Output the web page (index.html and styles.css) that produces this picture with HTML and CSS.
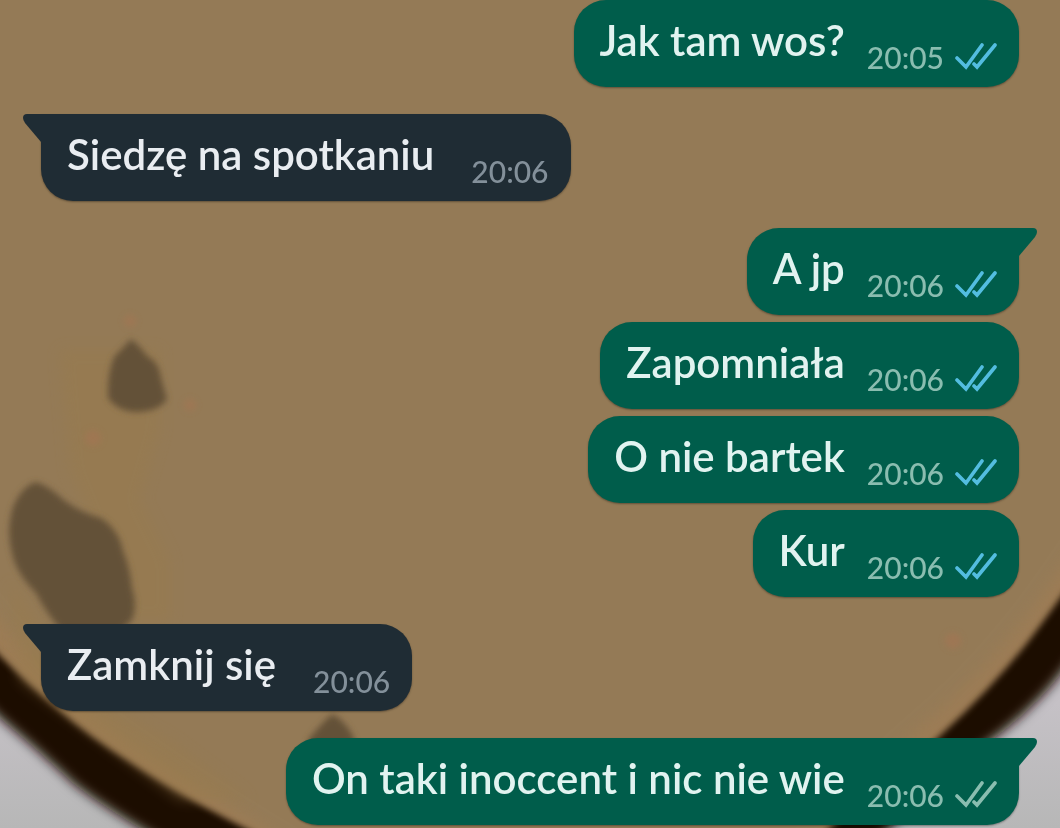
FILE: index.html
```html
<!DOCTYPE html>
<html lang="pl">
<head>
<meta charset="utf-8">
<meta name="viewport" content="width=device-width, initial-scale=1">
<title>Czat</title>
<link rel="stylesheet" href="styles.css">
</head>
<body>
<svg class="wallpaper" viewBox="0 0 1060 828" preserveAspectRatio="xMidYMid slice" aria-hidden="true">
  <defs>
    <filter id="edge" x="-10%" y="-10%" width="120%" height="120%"><feGaussianBlur stdDeviation="6"/></filter>
    <filter id="soft" x="-10%" y="-10%" width="120%" height="120%"><feGaussianBlur stdDeviation="3"/></filter>
    <filter id="softer" x="-30%" y="-30%" width="160%" height="160%"><feGaussianBlur stdDeviation="7"/></filter>
    <linearGradient id="wall" x1="0" y1="0" x2="0" y2="1"><stop offset="0.85" stop-color="#c5c1c6"/><stop offset="1" stop-color="#b7b7b7"/></linearGradient>
  </defs>
  <rect width="1060" height="828" fill="url(#wall)"/>
  <path filter="url(#edge)" fill="#1c1005" d="M-40-40H1100V620Q1060 678 1040 698Q1010 729 966 758Q920 793 870 850H178Q110 812 74 784Q38 750 0 718L-40 680Z"/>
  <path filter="url(#soft)" fill="#9c7c55" d="M-40-40H1100V540Q1060 600 1028 642Q990 690 942 734Q890 783 800 850H290Q190 803 133 764Q90 737 58 709Q28 684 0 656L-40 610Z"/>
  <path filter="url(#softer)" fill="#947a56" d="M-40-40H1100V510Q1050 588 1014 632Q970 686 920 728Q870 770 800 850H300Q200 790 146 752Q100 722 66 690Q36 662 6 628L-40 570Z"/>
  <g filter="url(#softer)" fill="#997b4c" opacity=".4">
    <path d="M60 350H160V430L140 500 170 560V620H130L70 470Z"/>
    <path d="M10 580L80 690 170 740 250 800H180L20 680Z"/>
  </g>
  <g filter="url(#soft)" fill="#645138">
    <path d="M131 339Q141 347 147 356Q159 362 161 378L167 399Q160 411 138 412Q118 412 108 398Q107 374 114 357Q122 349 131 339Z"/>
    <path d="M36 482Q49 486 65 501Q82 513 101 518Q119 530 123 551Q130 567 132 588Q138 606 132 620L110 640H70Q48 617 36 593Q16 573 12 553Q6 531 13 507Q22 486 36 482Z"/>
    <path d="M332 714Q345 720 354 738V760H308V740Q320 725 332 714Z"/>
  </g>
  <g filter="url(#soft)" fill="#a47452" opacity=".6"><circle cx="93" cy="438" r="8"/><circle cx="130" cy="321" r="6"/><circle cx="190" cy="405" r="6"/><circle cx="953" cy="641" r="8"/></g>
</svg>

<svg class="symbols" aria-hidden="true">
  <symbol id="ticks" viewBox="0 0 42 28"><path d="M2 16L11 25L27 3M19 22L22 25L40 3" fill="none" stroke="currentColor" stroke-width="3.6" stroke-linecap="round" stroke-linejoin="miter"/></symbol>
  <symbol id="tail" viewBox="0 0 20 30"><path d="M20 0H5Q1 0 1 4Q1 6 3 9L19 28H20Z" fill="currentColor"/></symbol>
</svg>

<main class="chat">
  <section class="group sent">
    <article class="bubble"><p class="text">Jak tam wos?</p><time class="time">20:05</time><svg class="ticks read" role="img" aria-label="Przeczytano"><use href="#ticks"/></svg></article>
  </section>
  <section class="group received">
    <article class="bubble"><svg class="tail" aria-hidden="true"><use href="#tail"/></svg><p class="text">Siedzę na spotkaniu</p><time class="time">20:06</time></article>
  </section>
  <section class="group sent">
    <article class="bubble"><svg class="tail" aria-hidden="true"><use href="#tail"/></svg><p class="text">A jp</p><time class="time">20:06</time><svg class="ticks read" role="img" aria-label="Przeczytano"><use href="#ticks"/></svg></article>
    <article class="bubble"><p class="text">Zapomniała</p><time class="time">20:06</time><svg class="ticks read" role="img" aria-label="Przeczytano"><use href="#ticks"/></svg></article>
    <article class="bubble"><p class="text">O nie bartek</p><time class="time">20:06</time><svg class="ticks read" role="img" aria-label="Przeczytano"><use href="#ticks"/></svg></article>
    <article class="bubble"><p class="text">Kur</p><time class="time">20:06</time><svg class="ticks read" role="img" aria-label="Przeczytano"><use href="#ticks"/></svg></article>
  </section>
  <section class="group received">
    <article class="bubble"><svg class="tail" aria-hidden="true"><use href="#tail"/></svg><p class="text">Zamknij się</p><time class="time">20:06</time></article>
  </section>
  <section class="group sent">
    <article class="bubble"><svg class="tail" aria-hidden="true"><use href="#tail"/></svg><p class="text">On taki inoccent i nic nie wie</p><time class="time">20:06</time><svg class="ticks" role="img" aria-label="Dostarczono"><use href="#ticks"/></svg></article>
  </section>
</main>
</body>
</html>
```
FILE: styles.css
```css
* {
  box-sizing: border-box;
}

body {
  margin: 0;
  background: #947a56;
  font-family: Lato, "Noto Sans", sans-serif;
}

.wallpaper {
  position: fixed;
  inset: 0;
  z-index: -1;
  width: 100%;
  height: 100%;
}

.symbols {
  position: absolute;
  width: 0;
  height: 0;
}

.chat {
  display: flex;
  flex-direction: column;
  gap: 27px;
  padding: 0 41px 3px;
}

.group {
  display: flex;
  flex-direction: column;
  gap: 7px;
}

.sent {
  align-items: flex-end;
  color: #005d4b;
}

.received {
  align-items: flex-start;
  color: #1f2c34;
}

.bubble {
  position: relative;
  display: flex;
  align-items: flex-end;
  padding: 12px 22px 12px 26px;
  border-radius: 32px;
  background: currentColor;
  box-shadow: 0 1px 2px rgb(0 0 0 / 35%);
}

.sent .bubble:has(.tail) {
  border-top-right-radius: 0;
}

.received .bubble:has(.tail) {
  border-top-left-radius: 0;
}

.tail {
  position: absolute;
  top: 0;
  right: 100%;
  width: 20px;
  height: 30px;
  margin-right: -1px;
}

.sent .tail {
  right: auto;
  left: 100%;
  margin: 0 0 0 -1px;
  transform: scaleX(-1);
}

.text {
  margin: 0 22px 7px 0;
  font-size: 42px;
  font-weight: 600;
  line-height: 56px;
  color: #e1f3f0;
}

.received .text {
  margin-right: 37px;
  color: #e9edf1;
}

.time {
  font-size: 30px;
  font-weight: 500;
  line-height: 36px;
  color: #8abdb0;
}

.received .time {
  color: #83909a;
}

.ticks {
  width: 42px;
  height: 28px;
  margin: 0 0 5px 11px;
  color: #8abdb0;
}

.ticks.read {
  color: #53bde0;
}
```
